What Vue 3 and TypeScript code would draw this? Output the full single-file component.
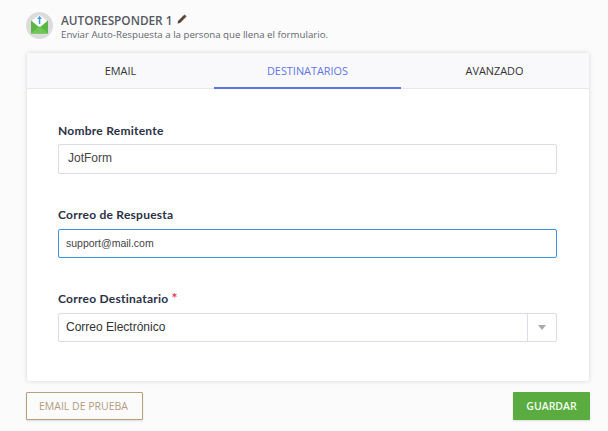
<script setup lang="ts">
const tabs = ['EMAIL', 'DESTINATARIOS', 'AVANZADO']
const active = 'DESTINATARIOS'
</script>

<template>
  <div class="page">
    <header class="head">
      <svg class="logo" width="27" height="27" viewBox="0 0 27 27">
        <circle cx="13.5" cy="13.5" r="13.5" fill="#dcdcdc" />
        <path d="M6.5 8 L13.5 3 L20.5 8 V18 H6.5 Z" fill="#fff" />
        <path d="M5 8.5 L13.5 15.5 L22 8.5 V21.5 H5 Z" fill="#5cb646" />
        <path d="M5 21.5 L13 14.5 L14 14.5 L22 21.5 Z" fill="#6fc656" />
        <rect x="12.8" y="6" width="1.5" height="6" fill="#3f9ae0" />
        <path d="M11.2 7 L13.55 3.8 L15.9 7 Z" fill="#3f9ae0" />
      </svg>
      <div class="head-text">
        <div class="title">
          <span>AUTORESPONDER 1</span>
          <svg class="pencil" width="10" height="10" viewBox="0 0 10 10">
            <path d="M0.5 9.5 L1 7 L7 1 L9 3 L3 9 Z" fill="#5b4636" />
            <path d="M7.6 0.4 L9.6 2.4 L9 3 L7 1 Z" fill="#333" />
          </svg>
        </div>
        <div class="sub">Enviar Auto-Respuesta a la persona que llena el formulario.</div>
      </div>
    </header>

    <section class="card">
      <nav class="tabs">
        <div v-for="t in tabs" :key="t" class="tab" :class="{ on: t === active }">{{ t }}</div>
      </nav>
      <div class="body">
        <div class="field f1">
          <label>Nombre Remitente</label>
          <div class="input large">JotForm</div>
        </div>
        <div class="field f2">
          <label>Correo de Respuesta</label>
          <div class="input focus">support@mail.com</div>
        </div>
        <div class="field f3">
          <label>Correo Destinatario <span class="req">*</span></label>
          <div class="select">
            <div class="value">Correo Electrónico</div>
            <div class="arrow"><i></i></div>
          </div>
        </div>
      </div>
    </section>

    <footer class="foot">
      <button class="btn test">EMAIL DE PRUEBA</button>
      <button class="btn save">GUARDAR</button>
    </footer>
  </div>
</template>

<style>
html, body { margin: 0; background: #fbfbfb; }
</style>

<style scoped>
.page {
  width: 608px;
  height: 431px;
  box-sizing: border-box;
  padding: 12px 18px 0 26px;
  background: #fbfbfb;
  font-family: "Open Sans", sans-serif;
  overflow: hidden;
}
.head { display: flex; align-items: flex-start; gap: 8px; height: 41px; }
.logo { flex: none; }
.title {
  display: flex;
  align-items: center;
  gap: 5px;
  font-size: 11.8px;
  font-weight: 600;
  color: #55585f;
  line-height: 16px;
}
.pencil { margin-top: -2px; }
.sub { font-size: 9.7px; color: #636770; line-height: 14px; }
.card {
  width: 562px;
  height: 328px;
  margin-left: 1px;
  background: #fff;
  border-radius: 2px;
  box-shadow: 0 0 4px rgba(0, 0, 0, 0.16);
}
.tabs {
  display: grid;
  grid-template-columns: 187px 187px 187px;
  height: 36px;
  box-sizing: border-box;
  background: #f9f9fb;
  border-bottom: 1px solid #e6e6f2;
  border-radius: 2px 2px 0 0;
}
.tab {
  height: 36px;
  box-sizing: border-box;
  text-align: center;
  font-size: 10.9px;
  line-height: 35px;
  color: #333;
}
.tab.on { color: #6176e4; border-bottom: 2px solid #5f73e3; }
.body { padding: 0 32px 0 31px; }
.field label {
  display: block;
  font-family: Lato, sans-serif;
  font-weight: 700;
  font-size: 12px;
  line-height: 16px;
  letter-spacing: 0.25px;
  color: #2b3245;
  margin-bottom: 6px;
}
.f1 { padding-top: 34px; }
.f1 label { margin-bottom: 5px; }
.f2 { padding-top: 33px; }
.f3 { padding-top: 33px; }
.input, .select {
  box-sizing: border-box;
  width: 499px;
  height: 30px;
  border: 1px solid #dcdcec;
  border-radius: 2px;
  background: #fff;
  font-family: "Liberation Sans", Arial, sans-serif;
}
.input {
  padding-left: 7px;
  font-size: 10.5px;
  line-height: 28px;
  color: #444;
}
.input.large { padding-left: 9px; font-size: 12px; line-height: 26px; }
.input.focus { border-color: #3f93e0; height: 29px; line-height: 27px; }
.select { display: flex; height: 29px; }
.value { flex: 1; padding-left: 7px; font-size: 12px; line-height: 27px; color: #333; }
.arrow {
  width: 28px;
  border-left: 1px solid #dcdcec;
  display: flex;
  align-items: center;
  justify-content: center;
}
.arrow i {
  width: 0;
  height: 0;
  border-left: 4px solid transparent;
  border-right: 4px solid transparent;
  border-top: 5px solid #aaa;
}
.req { color: #e8345a; font-size: 14px; line-height: 12px; font-weight: 700; }
.foot {
  display: flex;
  justify-content: space-between;
  margin-top: 11px;
}
.btn {
  box-sizing: border-box;
  height: 28px;
  border-radius: 1px;
  font-family: "Open Sans", sans-serif;
  font-size: 10.5px;
  padding: 0;
  box-shadow: 0 1px 2px rgba(0, 0, 0, 0.12);
}
.test {
  width: 117px;
  background: #fbfbfb;
  border: 1px solid #b89f7e;
  color: #b39c80;
  padding-right: 2px;
}
.save {
  width: 77px;
  background: #5aab40;
  border: none;
  color: #f4fff0;
  font-weight: 600;
}
</style>
